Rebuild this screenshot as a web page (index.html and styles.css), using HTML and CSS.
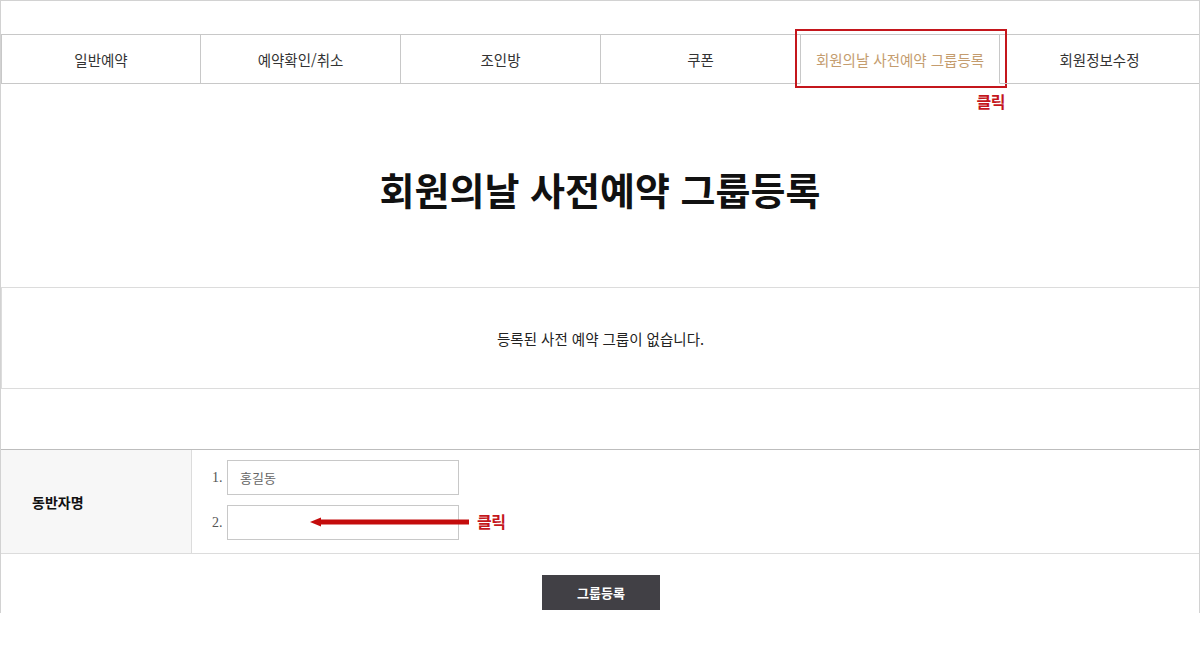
FILE: index.html
```html
<!DOCTYPE html>
<html lang="ko">
<head>
<meta charset="utf-8">
<title>회원의날 사전예약 그룹등록</title>
<link rel="stylesheet" href="styles.css">
</head>
<body>
<div class="page">
  <ul class="tabs">
    <li class="tab">일반예약</li>
    <li class="tab">예약확인/취소</li>
    <li class="tab">조인방</li>
    <li class="tab">쿠폰</li>
    <li class="tab active">회원의날 사전예약 그룹등록
      <span class="hl-box"></span>
      <span class="hl-label">클릭</span>
    </li>
    <li class="tab last">회원정보수정</li>
  </ul>

  <div class="title-wrap">
    <h1 class="title">회원의날 사전예약 그룹등록</h1>
  </div>

  <div class="notice">등록된 사전 예약 그룹이 없습니다.</div>

  <div class="form">
    <div class="form-row">
      <div class="label">동반자명</div>
      <div class="field">
        <div class="entry"><span class="num">1.</span><input class="inp" type="text" placeholder="홍길동"></div>
        <div class="entry"><span class="num">2.</span><input class="inp" type="text">
          <span class="arrow">
            <svg width="160" height="10" viewBox="0 0 160 10"><polygon points="0,5 11,0.5 11,9.5" fill="#c40c0c"/><rect x="10" y="2.5" width="149" height="5" fill="#c40c0c"/></svg>
          </span>
          <span class="arrow-label">클릭</span>
        </div>
      </div>
    </div>
  </div>

  <div class="actions">
    <button class="btn" type="button">그룹등록</button>
  </div>
</div>
</body>
</html>
```

FILE: styles.css
```css
* { box-sizing: border-box; }
html, body { margin: 0; padding: 0; background: #fff; }
body {
  font-family: "Noto Sans CJK KR", "Noto Sans", sans-serif;
  color: #333;
}
.page {
  width: 1200px;
  height: 613px;
  border: 1px solid #d2d2d2;
  border-bottom: none;
  padding-top: 33px;
}
.tabs {
  list-style: none;
  margin: 0;
  padding: 0;
  display: flex;
  border-top: 1px solid #c8c8c8;
  border-left: 1px solid #c8c8c8;
}
.tab {
  position: relative;
  width: 200px;
  height: 49px;
  display: flex;
  align-items: center;
  justify-content: center;
  font-size: 14.5px;
  color: #333;
  white-space: nowrap;
  border-right: 1px solid #c8c8c8;
  border-bottom: 1px solid #c8c8c8;
}
.tab:first-child { width: 199px; }
.tab.last { border-right: none; flex: 1; }
.tab.active {
  color: #c49c6e;
  border-bottom-color: #fff;
  border-left: 1px solid #c8c8c8;
  margin-left: -1px;
}
.hl-box {
  position: absolute;
  left: -6px;
  top: -6px;
  width: 212px;
  height: 59px;
  border: 2px solid #c4161c;
}
.hl-label {
  position: absolute;
  right: -6px;
  top: 54px;
  font-size: 16px;
  font-weight: 700;
  color: #c4161c;
  white-space: nowrap;
  letter-spacing: -0.5px;
}
.title-wrap {
  height: 203px;
  display: flex;
  align-items: center;
  justify-content: center;
  padding-top: 6px;
}
.title {
  margin: 0;
  font-size: 38px;
  font-weight: 700;
  color: #111;
  line-height: 1.2;
}
.notice {
  height: 102px;
  border: 1px solid #dcdcdc;
  border-right: none;
  display: flex;
  align-items: center;
  justify-content: center;
  font-size: 14.5px;
  color: #222;
}
.form {
  margin-top: 60px;
  border-top: 1px solid #bdbdbd;
}
.form-row {
  display: flex;
  border-bottom: 1px solid #dcdcdc;
}
.label {
  width: 191px;
  background: #f7f7f7;
  border-right: 1px solid #dcdcdc;
  display: flex;
  align-items: center;
  padding-left: 31px;
  font-size: 14px;
  font-weight: 700;
  color: #111;
}
.field {
  padding: 10px 0 13px 20px;
  display: flex;
  flex-direction: column;
  gap: 10px;
}
.entry {
  position: relative;
  display: flex;
  align-items: center;
}
.num {
  width: 15px;
  font-family: "Liberation Serif", serif;
  font-size: 14px;
  color: #555;
}
.inp {
  width: 232px;
  height: 35px;
  border: 1px solid #c8c8c8;
  padding: 0 12px;
  margin: 0;
  font-family: "Noto Sans CJK KR", sans-serif;
  font-size: 13px;
  color: #333;
  background: #fff;
  outline: none;
}
.inp::placeholder { color: #666; }
.arrow {
  position: absolute;
  left: 98px;
  top: 12px;
  height: 10px;
  line-height: 0;
}
.arrow-label {
  position: absolute;
  left: 265px;
  top: 4px;
  font-size: 16px;
  font-weight: 700;
  color: #c4161c;
  white-space: nowrap;
  letter-spacing: -0.5px;
}
.actions {
  display: flex;
  justify-content: center;
  padding-top: 21px;
  padding-left: 2px;
}
.btn {
  width: 118px;
  height: 35px;
  border: none;
  background: #414045;
  color: #fff;
  font-family: "Noto Sans CJK KR", sans-serif;
  font-size: 13px;
  font-weight: 700;
  cursor: pointer;
}
```
